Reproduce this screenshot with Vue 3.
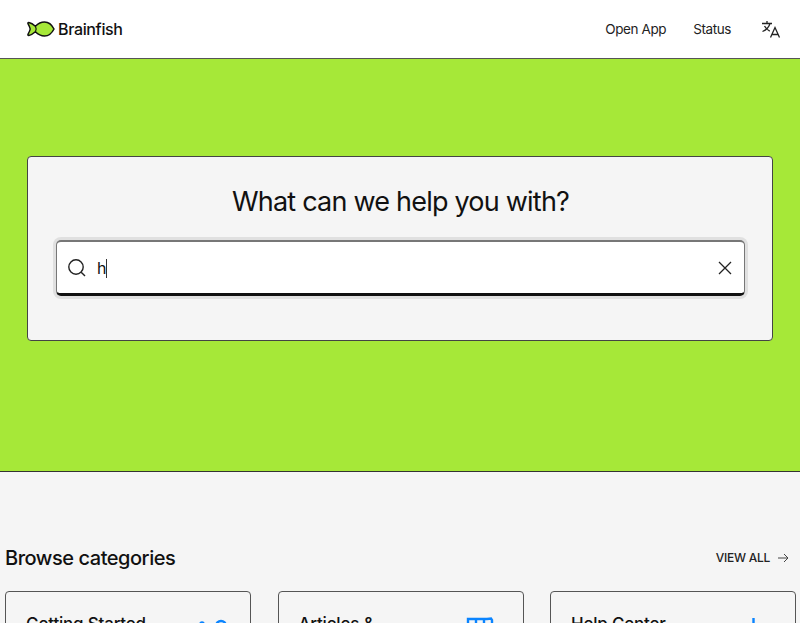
<template>
  <div class="page">
    <header class="topbar">
      <a class="brand">
        <svg class="fish" width="28" height="16" viewBox="0 0 28 16">
          <path d="M1.8 1.6C4 2 6.4 3.4 8.4 5.2C11 2.6 14 1 17.5 1C21.5 1 25 4 27 8C25 12 21.5 15 17.5 15C14 15 11 13.4 8.4 10.8C6.4 12.6 4 14 1.8 14.4C1 14.5 .7 13.8 1.1 13.1C2 11.5 2.9 9.8 3.2 8C2.9 6.2 2 4.5 1.1 2.9C.7 2.2 1 1.5 1.8 1.6Z" fill="#a6e838" stroke="#111" stroke-width="1.5" stroke-linejoin="round"/>
          <path d="M8.4 5.2C9.4 7 9.4 9 8.4 10.8" fill="none" stroke="#111" stroke-width="1.2"/>
        </svg>
        <span>Brainfish</span>
      </a>
      <nav class="nav">
        <a>Open App</a>
        <a>Status</a>
        <svg class="translate" width="20" height="20" viewBox="0 0 20 20" fill="none" stroke="#222" stroke-width="1.3">
          <path d="M1 4.5H11M6 2V4.5M9 4.5C8 8 5 11 1.5 12.5M3.5 7C4.8 9.5 6.5 11 8.8 12.2"/>
          <path d="M9.5 18.5L14 8.5L18.5 18.5M11 15.5H17"/>
        </svg>
      </nav>
    </header>

    <section class="hero">
      <div class="search-card">
        <h1>What can we help you with?</h1>
        <div class="search-box">
          <svg width="20" height="20" viewBox="0 0 20 20" fill="none" stroke="#222" stroke-width="1.4">
            <circle cx="9" cy="9" r="7.2"/>
            <path d="M14.2 14.2L18 18"/>
          </svg>
          <span class="query">h</span>
          <svg class="clear" width="16" height="16" viewBox="0 0 16 16" fill="none" stroke="#222" stroke-width="1.3">
            <path d="M2 2L14 14M14 2L2 14"/>
          </svg>
        </div>
      </div>
    </section>

    <section class="browse">
      <div class="browse-head">
        <h2>Browse categories</h2>
        <a class="view-all">
          VIEW ALL
          <svg width="12" height="10" viewBox="0 0 12 10" fill="none" stroke="#444" stroke-width="1">
            <path d="M1 5H11M7 1L11 5L7 9"/>
          </svg>
        </a>
      </div>
      <div class="cards">
        <div v-for="c in categories" :key="c.title" class="card">
          <h3>{{ c.title }}</h3>
          <svg class="card-icon" width="36" height="36" viewBox="0 0 36 36" fill="none" stroke="#0a84ff" stroke-width="2.4" v-html="c.icon"></svg>
        </div>
      </div>
    </section>
  </div>
</template>

<script setup>
const categories = [
  { title: 'Getting Started', icon: '<circle cx="9" cy="7" r="1.5"/><circle cx="28" cy="9" r="5"/>' },
  { title: 'Articles &', icon: '<path d="M2 2H21L25 1.5L26 3V30H2Z"/><path d="M10 2V30M18 2V30"/>' },
  { title: 'Help Center', icon: '<path d="M15.5 1V30"/>' }
]
</script>

<style scoped>
.page {
  width: 800px;
  font-family: Inter, "Liberation Sans", sans-serif;
  color: #111;
  background: #f5f5f5;
}

.topbar {
  height: 59px;
  box-sizing: border-box;
  background: #fff;
  border-bottom: 1px solid #555;
  display: flex;
  align-items: center;
  justify-content: space-between;
  padding: 0 19px 0 27px;
}

.brand {
  display: flex;
  align-items: center;
  gap: 3px;
  font-size: 16px;
  font-weight: 500;
  letter-spacing: -0.35px;
}

.nav {
  display: flex;
  align-items: center;
  font-size: 13.5px;
  letter-spacing: -0.4px;
  color: #222;
}

.nav a:first-child {
  margin-right: 27px;
}

.translate {
  margin-left: 30px;
}

.hero {
  height: 413px;
  box-sizing: border-box;
  background: #a6e838;
  border-bottom: 1px solid #333;
  padding: 97px 27px 0;
}

.search-card {
  height: 185px;
  box-sizing: border-box;
  background: #f5f5f5;
  border: 1px solid #444;
  border-radius: 4px;
  padding: 27px 27px 0 28px;
}

h1 {
  margin: 0 0 20px;
  font-size: 27px;
  line-height: 36px;
  font-weight: 400;
  letter-spacing: -0.78px;
  text-align: center;
}

.search-box {
  height: 56px;
  box-sizing: border-box;
  background: #fff;
  border: 1px solid #777;
  border-top-width: 2px;
  border-bottom: 3px solid #111;
  border-radius: 5px;
  box-shadow: 0 0 0 3px #e0e0e0;
  display: flex;
  align-items: center;
  padding: 0 11px 0 10px;
}

.query {
  flex: 1;
  margin-left: 10px;
  font-size: 16px;
}

.query::after {
  content: "";
  display: inline-block;
  width: 1px;
  height: 19px;
  background: #333;
  vertical-align: -4px;
}

.browse {
  padding: 0 4px 0 5px;
}

.browse-head {
  display: flex;
  justify-content: space-between;
  align-items: flex-start;
  padding: 73px 7px 0 0;
  height: 119px;
  box-sizing: border-box;
}

h2 {
  margin: 0;
  font-size: 20px;
  line-height: 26px;
  font-weight: 500;
  letter-spacing: -0.46px;
}

.view-all {
  display: flex;
  align-items: center;
  gap: 7px;
  font-size: 12px;
  line-height: 26px;
  font-weight: 500;
  letter-spacing: -0.25px;
  color: #222;
}

.cards {
  display: grid;
  grid-template-columns: repeat(3, 1fr);
  gap: 26.5px;
}

.card {
  height: 120px;
  box-sizing: border-box;
  border: 1px solid #555;
  border-radius: 4px;
  display: flex;
  justify-content: space-between;
  padding: 20px 21px 20px 20px;
}

.card-icon {
  margin-top: 5px;
}

h3 {
  margin: 0;
  font-size: 17px;
  line-height: 24px;
  font-weight: 500;
  letter-spacing: -0.2px;
}
</style>

<style>
html, body {
  overflow: hidden;
  background: #f5f5f5;
}
</style>
